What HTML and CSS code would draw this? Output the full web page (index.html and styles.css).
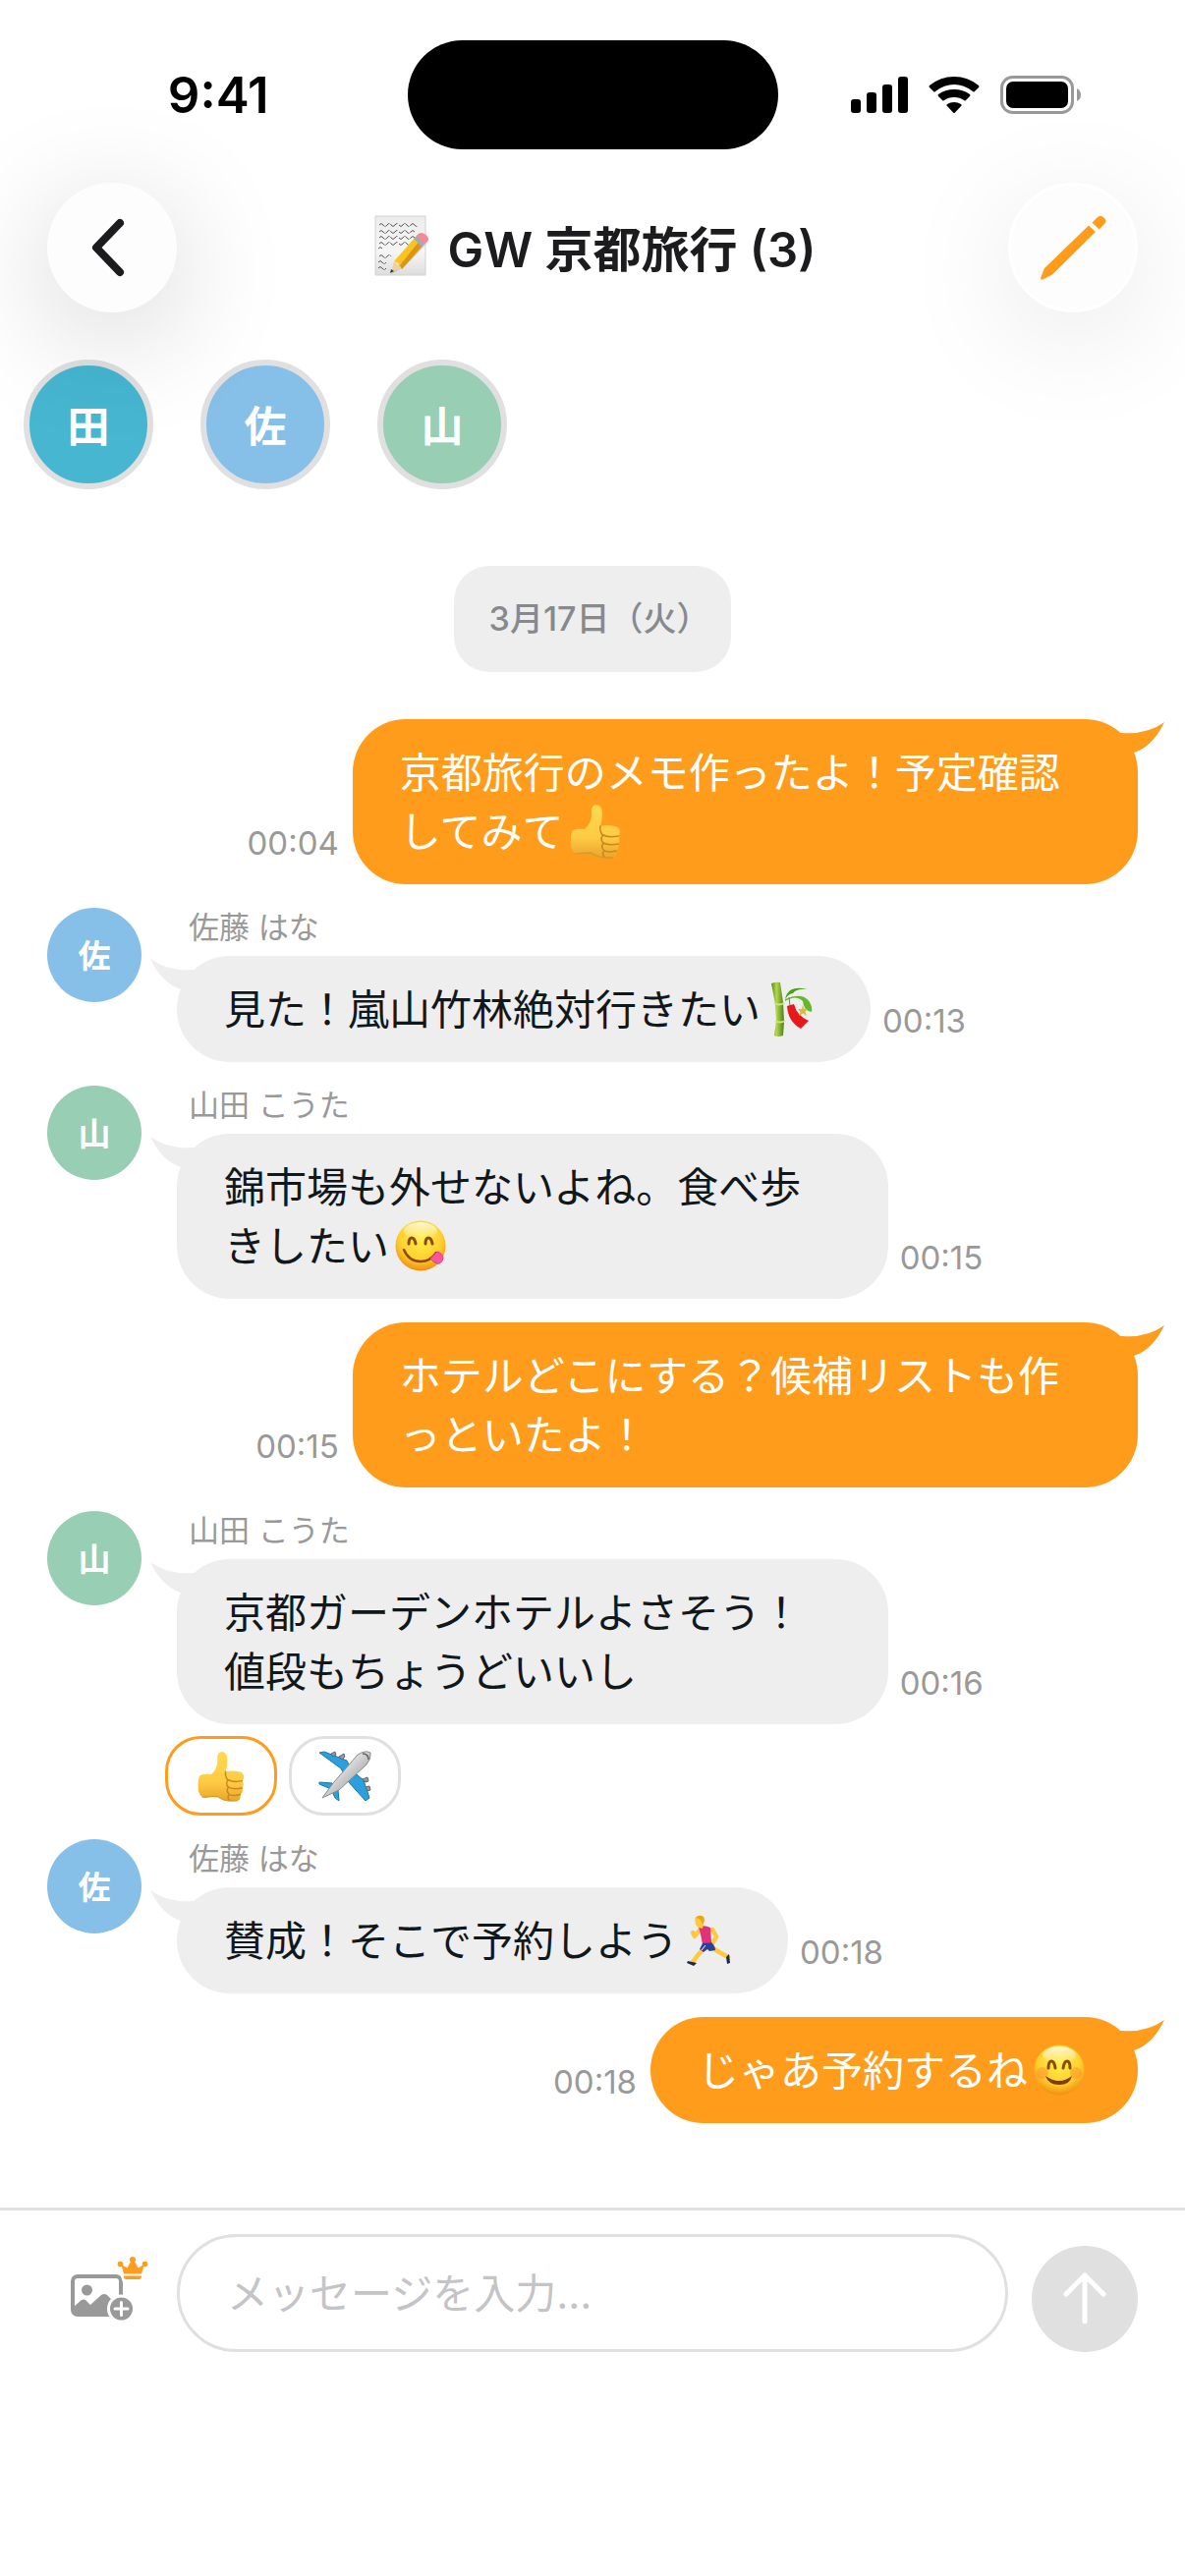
FILE: index.html
```html
<!DOCTYPE html>
<html lang="ja">
<head>
    <meta charset="UTF-8">
    <meta name="viewport" content="width=device-width, initial-scale=1.0">
    <title>GW 京都旅行</title>
    <link rel="stylesheet" href="styles.css">
</head>
<body>
    <!-- 絵文字 -->
    <svg class="defs" aria-hidden="true">
        <defs>
            <linearGradient id="skin" x1="0" y1="0" x2="0" y2="1">
                <stop offset="0" stop-color="#ffd94f"/>
                <stop offset="0.6" stop-color="#ffcb45"/>
                <stop offset="1" stop-color="#e8a52c"/>
            </linearGradient>
            <radialGradient id="face" cx="0.5" cy="0.35" r="0.65">
                <stop offset="0" stop-color="#fff04a"/>
                <stop offset="0.65" stop-color="#ffd02e"/>
                <stop offset="1" stop-color="#ef8f12"/>
            </radialGradient>
            <linearGradient id="shine" x1="0" y1="0" x2="0" y2="1">
                <stop offset="0" stop-color="#fff" stop-opacity="0.8"/>
                <stop offset="1" stop-color="#fff" stop-opacity="0"/>
            </linearGradient>
            <linearGradient id="bamboo" x1="0" y1="0" x2="1" y2="0">
                <stop offset="0" stop-color="#4f8a16"/>
                <stop offset="0.4" stop-color="#b3d84d"/>
                <stop offset="1" stop-color="#4b7f17"/>
            </linearGradient>
            <linearGradient id="plane" x1="0" y1="0" x2="1" y2="1">
                <stop offset="0.2" stop-color="#ffffff"/>
                <stop offset="0.8" stop-color="#9a9a9a"/>
            </linearGradient>
            <linearGradient id="paper" x1="0" y1="0" x2="0" y2="1">
                <stop offset="0" stop-color="#ececec"/>
                <stop offset="0.6" stop-color="#f6f6f6"/>
                <stop offset="1" stop-color="#dddddd"/>
            </linearGradient>
        </defs>
        <symbol id="thumbs-up" viewBox="0 0 52 56">
            <path fill="url(#skin)" d="M3 27 Q8 25 15 26 Q22 20 22 11 Q21 1 27 1 Q33 2 33 10 Q33 17 31 23 Q36 21 46 23 Q51 24 51 29 Q51 32 49 33 Q52 36 49 41 Q51 46 47 48 Q48 54 44 55 Q30 57 23 51 Q16 50 8 52 Q3 51 1 44 Q0 31 3 27Z"/>
            <path fill="none" stroke="#c98a1b" stroke-width="1.6" stroke-linecap="round" d="M31 23 Q30 27 33 32 M49 33 Q40 35 34 32 Q30 36 34 40 M49 41 Q40 43 34 40 Q31 44 35 48 M47 48 Q40 50 35 48 Q32 51 35 54"/>
            <path fill="none" stroke="#cc901f" stroke-width="1.4" opacity="0.6" d="M5 51 Q14 50 22 50 Q29 56 44 55"/>
        </symbol>
        <symbol id="bamboo-strip" viewBox="0 0 52 56">
            <path fill="url(#bamboo)" d="M5 2 Q10 0 14 1 L17 21 L18 41 L17 55 Q12 57 8 55 L10 40 L9 23Z"/>
            <path fill="none" stroke="#cbe678" stroke-width="2" d="M8 22 Q13 25 18 22 M9 40 Q14 43 19 40"/>
            <path fill="#4f9e1d" d="M19 18 Q22 3 42 8 Q31 7 27 12 Q23 12 19 18Z"/>
            <path fill="#66b82a" d="M19 18 Q37 10 44 21 Q47 26 46 31 Q38 30 37 20 Q30 13 19 20Z"/>
            <path fill="none" stroke="#4f9e1d" d="M23 16 L24 25"/>
            <path fill="#e8191b" d="M21 25 L28 23 Q31 35 43 40 L35 48 Q22 41 21 25Z"/>
            <path fill="#d8bd39" d="M37 24 L38.5 28 L42 28 L39.5 31 L41 35 L37 32.5 L33 35 L34.5 31 L32 28 L36 28Z"/>
        </symbol>
        <symbol id="yummy" viewBox="0 0 52 52">
            <circle cx="26" cy="26" r="25.5" fill="url(#face)"/>
            <ellipse cx="26" cy="11" rx="17" ry="9" fill="url(#shine)"/>
            <path fill="none" stroke="#8a4a0b" stroke-width="3" stroke-linecap="round" d="M14 24 Q14 18 17 18 Q20 18 21 24 M31 24 Q31 18 34 18 Q37 18 38 24"/>
            <path fill="none" stroke="#8a4a0b" stroke-width="2.4" stroke-linecap="round" d="M9 30 Q14 42 26 42 Q36 42 42 33"/>
            <path fill="#f8579b" stroke="#e03a80" d="M36 39 L43 32 Q49 34 49 39 Q47 45 43 44 Q40 44 36 39Z"/>
        </symbol>
        <symbol id="smile" viewBox="0 0 52 52">
            <circle cx="26" cy="26" r="25.5" fill="url(#face)"/>
            <ellipse cx="26" cy="11" rx="17" ry="9" fill="url(#shine)"/>
            <circle cx="9" cy="29" r="6" fill="#ff7a2c" opacity="0.4"/>
            <circle cx="43" cy="29" r="6" fill="#ff7a2c" opacity="0.4"/>
            <path fill="none" stroke="#8a4a0b" stroke-width="3" stroke-linecap="round" d="M15 24 Q15 17 18 17 Q21 17 22 24 M30 24 Q31 17 34 17 Q37 17 37 24"/>
            <path fill="#7c3d08" d="M12 32 Q26 42 39 32 Q37 41 26 41 Q15 41 12 32Z"/>
        </symbol>
        <symbol id="runner" viewBox="0 0 52 52">
            <path fill="none" stroke="#ffc83d" stroke-width="4.5" stroke-linecap="round" stroke-linejoin="round" d="M17 14 L11 22 L9 18 M29 15 L33 22 L28 31 M21 34 L15 40 L9 48 M28 33 L36 38 L45 43"/>
            <path fill="#e2317b" d="M15 12 Q21 10 27 13 L28 28 L19 30 L17 20Z"/>
            <path fill="#ffc83d" d="M11 4 Q13 0 18 1 Q22 3 20 9 L19 14 L15 13 L12 10Z"/>
            <path fill="#e6a621" d="M12 3 Q16 -1 20 2 Q22 6 19 10 Q18 4 12 3Z"/>
            <path fill="#2d3f9e" d="M19 29 L28 28 Q32 32 32 36 L26 37 L24 35 L20 38 L16 35Z"/>
            <path fill="none" stroke="#fff" d="M22 31 L18 36"/>
            <path fill="#1a2a4e" d="M4 47 L13 49 L10 52 L3 49Z M43 43 L46 40 L47 49 L44 50Z"/>
        </symbol>
        <symbol id="airplane" viewBox="0 0 54 52">
            <path fill="#2c9fdd" stroke="#1578ad" d="M1 2 L6 1 L29 10 L34 20 L46 30 L52 48 L48 51 L30 31 L23 18Z"/>
            <path fill="#2c9fdd" stroke="#1578ad" d="M1 32 L14 33 L20 40 L21 51 L17 48 L13 39 L1 34Z"/>
            <path fill="#999" stroke="#666" d="M13 3 L17 1 L18 4 L15 6Z M21 6 L26 3 L27 6 L24 9Z M45 29 L50 27 L51 31 L48 32Z M48 37 L52 36 L53 40 L50 41Z"/>
            <path fill="url(#plane)" stroke="#8b8b8b" d="M4 48 L15 33 L40 4 Q48 -1 53 2 Q54 8 49 14 L21 40Z"/>
            <path fill="none" stroke="#56606a" stroke-width="1.5" d="M45 3 Q51 3 51 9"/>
        </symbol>
        <symbol id="memo" viewBox="0 0 56 62">
            <path fill="url(#paper)" stroke="#d2d2d2" d="M1 1 H52 V61 H1Z"/>
            <path fill="none" stroke="#555" stroke-width="1" stroke-dasharray="7 1 5 1 9 2" d="M5 10 q2 -3 4 0 t4 0 t4 0 t4 0 t4 0 t4 0 t4 0 t4 0 t4 0 t4 0 M5 17 q2 -3 4 0 t4 0 t4 0 t4 0 t4 0 t4 0 t4 0 t4 0 t4 0 M5 23 q2 -3 4 0 t4 0 t4 0 t4 0 t4 0 t4 0 t4 0 t4 0 t4 0 M5 29 q2 -3 4 0 t4 0 t4 0 t4 0 t4 0 t4 0 t4 0 t4 0 M4 34 q2 -3 4 0 M5 42 q2 -3 4 0 t4 0 t4 0 M4 48 q2 -3 4 0 t4 0 M4 54 q2 -3 4 0 t4 0"/>
            <path fill="#777" opacity="0.35" d="M17 60 L31 52 L52 30 L44 28Z"/>
            <path fill="#f1d197" d="M17 58 L20 47 L28 54Z"/>
            <path fill="#f9c421" d="M20 47 L42 22 L50 30 L28 55 Q27 49 20 47Z"/>
            <path fill="#dc9512" d="M46 26 L50 30 L28 55 L26 51Z"/>
            <path fill="#9eabb9" d="M40 24 L44 20 L52 28 L48 32Z"/>
            <path fill="#f08b97" d="M43 21 Q46 16 51 19 Q57 23 54 27 L51 30Z"/>
            <path fill="#333" d="M16 59 L17 55 L20 57Z"/>
        </symbol>
    </svg>

    <div class="status-bar">
        <div class="time">9:41</div>
        <div class="island"></div>
        <div class="status-icons">
            <svg width="58" height="38" viewBox="0 0 58 38" aria-hidden="true">
                <rect x="0" y="23" width="10" height="14" rx="3"/>
                <rect x="16" y="16" width="10" height="21" rx="3"/>
                <rect x="32" y="8" width="10" height="29" rx="3"/>
                <rect x="48" y="0" width="10" height="37" rx="3"/>
            </svg>
            <svg width="52" height="38" viewBox="0 0 52 38" aria-hidden="true">
                <path d="M1 11 Q0 10 1 9 Q12 0 26 0 Q40 0 51 9 Q52 10 51 11 L47 15 Q46 16 45 15 Q36 8 26 8 Q16 8 7 15 Q6 16 5 15Z"/>
                <path d="M10 20 Q9 19 10 18 Q17 13 26 13 Q35 13 42 18 Q43 19 42 20 L38 24 Q37 25 36 24 Q32 21 26 21 Q20 21 16 24 Q15 25 14 24Z"/>
                <path d="M18.5 29.5 Q18 28.5 19 28 Q22 26 26 26 Q30 26 33 28 Q34 28.5 33.5 29.5 L27 36.5 Q26 37.5 25 36.5Z"/>
            </svg>
            <svg width="83" height="40" viewBox="0 0 83 40" aria-hidden="true">
                <rect x="1.5" y="1.5" width="72" height="36" rx="11" fill="none" stroke="#999" stroke-width="3"/>
                <rect x="6" y="6" width="63" height="27" rx="7"/>
                <path fill="#999" d="M78 13 Q82 15 82 19.5 Q82 24 78 26Z"/>
            </svg>
        </div>
    </div>

    <header class="header">
        <button class="round-btn back-btn" aria-label="戻る">
            <svg width="44" height="60" viewBox="0 0 44 60">
                <path fill="none" stroke="#1c1c1e" stroke-width="8" stroke-linecap="round" stroke-linejoin="round" d="M30 5 L6 30 L30 55"/>
            </svg>
        </button>
        <h1 class="title">
            <svg class="memo" role="img" aria-label="メモ"><use href="#memo"/></svg>
            GW 京都旅行 (3)
        </h1>
        <button class="round-btn edit-btn" aria-label="編集">
            <svg width="70" height="68" viewBox="0 0 70 68">
                <path fill="#ff9c1b" d="M2 65 L6 55 L51 11.5 L58 18 L14 61.5 L4 66.5 Q2 67 2 65Z M54.5 8.5 L59.5 3.5 Q63 0 66.5 3.5 Q70 7 67 10 L61.5 15.5Z"/>
            </svg>
        </button>
    </header>

    <div class="members">
        <div class="member teal">田</div>
        <div class="member blue">佐</div>
        <div class="member green">山</div>
    </div>

    <main class="chat">
        <div class="date">3月17日（火）</div>

        <div class="message mine">
            <div class="bubble">京都旅行のメモ作ったよ！予定確認してみて<svg class="emoji" role="img" aria-label="いいね"><use href="#thumbs-up"/></svg></div>
            <span class="sent-at">00:04</span>
        </div>

        <div class="message">
            <div class="avatar blue">佐</div>
            <div class="body">
                <div class="name">佐藤 はな</div>
                <div class="row">
                    <div class="bubble">見た！嵐山竹林絶対行きたい<svg class="emoji" role="img" aria-label="笹"><use href="#bamboo-strip"/></svg></div>
                    <span class="sent-at">00:13</span>
                </div>
            </div>
        </div>

        <div class="message">
            <div class="avatar green">山</div>
            <div class="body">
                <div class="name">山田 こうた</div>
                <div class="row">
                    <div class="bubble">錦市場も外せないよね。食べ歩きしたい<svg class="emoji" role="img" aria-label="おいしい"><use href="#yummy"/></svg></div>
                    <span class="sent-at">00:15</span>
                </div>
            </div>
        </div>

        <div class="message mine">
            <div class="bubble">ホテルどこにする？候補リストも作っといたよ！</div>
            <span class="sent-at">00:15</span>
        </div>

        <div class="message">
            <div class="avatar green">山</div>
            <div class="body">
                <div class="name">山田 こうた</div>
                <div class="row">
                    <div class="bubble">京都ガーデンホテルよさそう！値段もちょうどいいし</div>
                    <span class="sent-at">00:16</span>
                </div>
                <div class="reactions">
                    <button class="reaction active" aria-label="いいね"><svg><use href="#thumbs-up"/></svg></button>
                    <button class="reaction" aria-label="飛行機"><svg><use href="#airplane"/></svg></button>
                </div>
            </div>
        </div>

        <div class="message">
            <div class="avatar blue">佐</div>
            <div class="body">
                <div class="name">佐藤 はな</div>
                <div class="row">
                    <div class="bubble">賛成！そこで予約しよう<svg class="emoji" role="img" aria-label="走る人"><use href="#runner"/></svg></div>
                    <span class="sent-at">00:18</span>
                </div>
            </div>
        </div>

        <div class="message mine">
            <div class="bubble">じゃあ予約するね<svg class="emoji" role="img" aria-label="笑顔"><use href="#smile"/></svg></div>
            <span class="sent-at">00:18</span>
        </div>
    </main>

    <form class="composer">
        <button type="button" class="photo-btn" aria-label="写真を追加">
            <svg width="80" height="70" viewBox="0 0 80 70">
                <rect x="2" y="21" width="49" height="39" rx="5" fill="none" stroke="#999" stroke-width="4"/>
                <circle cx="16.5" cy="35" r="5.5" fill="#999"/>
                <path fill="#999" d="M3 52 L11 45 Q13 44 15 45 L20 50 L31 40 Q34 38 37 40 L51 54 V60 H5Z"/>
                <circle cx="51.5" cy="54" r="14.5" fill="#fff"/>
                <circle cx="51.5" cy="54" r="11.5" fill="#999"/>
                <path stroke="#fff" stroke-width="3" stroke-linecap="round" d="M45 54 H58 M51.5 47.5 V60.5"/>
                <path fill="#fff" d="M50 18 L75 18 L72 27 H53Z"/>
                <path fill="#ff9c1b" d="M51.5 9 L57.5 12.5 L61.5 5 H64.5 L68.5 12.5 L74.5 9 L72 18.5 H54Z M54 20.5 H72 Q72 24 69.5 24 H56.5 Q54 24 54 20.5Z"/>
                <circle cx="50.5" cy="8.5" r="2.8" fill="#ff9c1b"/>
                <circle cx="63" cy="4" r="3" fill="#ff9c1b"/>
                <circle cx="75.5" cy="8.5" r="2.8" fill="#ff9c1b"/>
            </svg>
        </button>
        <input type="text" class="message-input" placeholder="メッセージを入力..." aria-label="メッセージ">
        <button type="submit" class="send-btn" aria-label="送信">
            <svg width="46" height="54" viewBox="0 0 46 54">
                <path fill="none" stroke="#fff" stroke-width="5" stroke-linecap="round" stroke-linejoin="round" d="M4 22 L23 3 L42 22 M23 4 V50"/>
            </svg>
        </button>
    </form>
</body>
</html>
```

FILE: styles.css
```css
* {
    box-sizing: border-box;
}

body {
    margin: 0;
    min-height: 100vh;
    background-color: #fff;
    font-family: Inter, 'Noto Sans CJK JP', sans-serif;
    color: #11181c;
}

button {
    display: flex;
    align-items: center;
    justify-content: center;
    padding: 0;
    border: none;
    background: none;
    cursor: pointer;
}

.defs {
    position: absolute;
    width: 0;
    height: 0;
}

/* ステータスバー */
.status-bar {
    display: grid;
    grid-template-columns: 1fr 377px 1fr;
    align-items: center;
    padding: 41px 30px 34px;
}

.time {
    text-align: center;
    font-size: 51px;
    font-weight: 600;
    color: #000;
}

.island {
    height: 111px;
    border-radius: 56px;
    background-color: #000;
}

.status-icons {
    display: flex;
    justify-content: center;
    align-items: center;
    gap: 21px;
}

/* ヘッダー */
.header {
    position: relative;
    z-index: 1;
    display: flex;
    align-items: center;
    justify-content: space-between;
    padding: 0 48px;
}

.round-btn {
    width: 132px;
    height: 132px;
    border-radius: 50%;
    background-color: #fdfdfd;
}

.back-btn {
    box-shadow: 0 24px 120px rgba(0, 0, 0, 0.18);
}

.edit-btn {
    border: 3px solid #fff;
    box-shadow: 0 24px 120px rgba(0, 0, 0, 0.1);
}

.title {
    display: flex;
    align-items: center;
    gap: 18px;
    margin: 0;
    padding: 0 0 4px 6px;
    font-size: 49px;
    font-weight: 600;
    color: #1c1c1e;
}

.memo {
    width: 56px;
    height: 62px;
}

.members {
    display: flex;
    gap: 48px;
    padding: 48px 24px 0;
}

.member,
.avatar {
    display: flex;
    align-items: center;
    justify-content: center;
    padding-bottom: 2px;
    border-radius: 50%;
    color: #fff;
    font-weight: 600;
}

.member {
    width: 132px;
    height: 132px;
    border: 6px solid #e0e0e0;
    font-size: 43px;
}

.avatar {
    flex: none;
    width: 96px;
    height: 96px;
    font-size: 33px;
}

.teal {
    background-color: #46b6d1;
}

.blue {
    background-color: #86c0e9;
}

.green {
    background-color: #97ceb4;
}

/* チャット */
.chat {
    display: flex;
    flex-direction: column;
    gap: 24px;
    padding: 78px 48px 86px;
}

.date {
    align-self: center;
    margin-bottom: 24px;
    padding: 24px 22px 24px 36px;
    border-radius: 36px;
    background-color: #eee;
    color: #868a8d;
    font-size: 34px;
    font-weight: 500;
    line-height: 60px;
}

.message {
    display: flex;
    align-items: flex-start;
    gap: 36px;
}

.body {
    flex: 1;
}

.name {
    margin: 0 0 9px 12px;
    font-size: 31px;
    line-height: 40px;
    color: #999;
}

.row {
    display: flex;
    align-items: flex-end;
    gap: 12px;
}

.bubble {
    position: relative;
    max-width: 74%;
    padding: 25px 48px 23px;
    border-radius: 54px;
    background-color: #eee;
    font-size: 42px;
    line-height: 60px;
}

/* 吹き出しのしっぽ */
.bubble::before {
    content: '';
    position: absolute;
    top: 2px;
    left: -27px;
    width: 46px;
    height: 34px;
    background-color: inherit;
    clip-path: path('M46 12 L43 12 Q18 14 0 1 Q12 26 31 32 L46 32 Z');
}

.mine {
    flex-direction: row-reverse;
    align-items: flex-end;
    gap: 14px;
}

.mine .bubble {
    max-width: 72%;
    background-color: #ff9c1b;
    color: #fff;
}

.mine .bubble::before {
    left: auto;
    right: -27px;
    transform: scaleX(-1);
}

.emoji {
    width: 52px;
    height: 56px;
    margin: 1px 6px 3px;
    vertical-align: top;
}

.sent-at {
    margin-bottom: 24px;
    font-size: 33px;
    line-height: 36px;
    color: #999;
}

.reactions {
    display: flex;
    gap: 12px;
    margin: 12px 0 0 -12px;
}

.reaction {
    width: 114px;
    height: 81px;
    border: 3px solid #e0e0e0;
    border-radius: 36px;
}

.reaction.active {
    border-color: #ff9c1b;
}

.reaction svg {
    width: 54px;
    height: 52px;
}

/* 入力欄 */
.composer {
    display: flex;
    align-items: flex-end;
    gap: 24px;
    padding: 24px 48px;
    border-top: 3px solid #e0e0e0;
}

.photo-btn,
.send-btn {
    flex: none;
    width: 108px;
    height: 108px;
}

.photo-btn {
    justify-content: flex-end;
    padding: 0 4px 18px 0;
}

.send-btn {
    border-radius: 50%;
    background-color: #e0e0e0;
}

.message-input {
    flex: 1;
    min-width: 0;
    height: 120px;
    padding: 0 48px;
    border: 3px solid #e0e0e0;
    border-radius: 60px;
    background-color: #fff;
    font-family: inherit;
    font-size: 42px;
    color: #11181c;
}

.message-input::placeholder {
    color: #c4c4c6;
}
```
